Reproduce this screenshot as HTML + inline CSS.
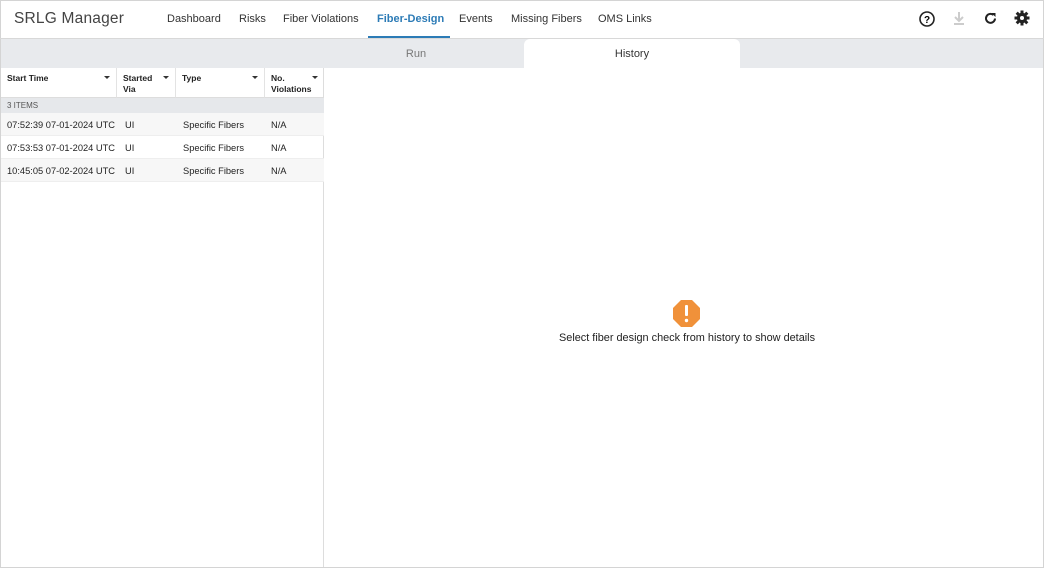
<!DOCTYPE html>
<html><head><style>
*{box-sizing:border-box;margin:0;padding:0}
body{width:1044px;height:568px;overflow:hidden;background:#fff;font-family:"Liberation Sans",sans-serif;color:#222;position:relative}
.frame{position:absolute;inset:0;border:1px solid #d4d4d4}
.top{position:absolute;left:0;top:0;width:1044px;height:39px;border-bottom:1px solid #d8d8d8}
.logo{position:absolute;left:14px;top:10px;font-size:15.5px;color:#444;letter-spacing:0.2px}
.nav{position:absolute;top:13px;font-size:11px;color:#333}
.act{color:#2c7bb6;font-weight:bold}
.ul{position:absolute;left:368px;top:36px;width:82px;height:2px;background:#2c7bb6}
.tabs{position:absolute;left:1px;top:39px;width:1042px;height:29px;background:#e8eaed}
.tab{position:absolute;top:1px;height:29px;line-height:29px;text-align:center;font-size:11px}
.left{position:absolute;left:1px;top:68px;width:323px;height:499px;border-right:1px solid #ddd}
.hdr{position:absolute;top:0;height:30px;font-size:8.5px;font-weight:bold;padding:5px 6px;line-height:11px;border-right:1px solid #e3e3e3;border-bottom:1px solid #ddd;color:#222}
.car{position:absolute;right:6px;top:8px;width:0;height:0;border-left:3px solid transparent;border-right:3px solid transparent;border-top:3px solid #333}
.grp{position:absolute;top:30px;left:0;width:323px;height:15px;background:#e6e8eb;font-size:8px;color:#555;padding:3px 6px}
.row{position:absolute;left:0;width:323px;height:23px;font-size:9.3px;border-bottom:1px solid #eee}
.row span{position:absolute;top:7px}
.msg{position:absolute;left:559px;top:332px;font-size:10.9px;color:#222}
</style></head><body>
<div class="frame"></div>
<div class="top">
<div class="logo">SRLG Manager</div>
<div class="nav" style="left:167px">Dashboard</div>
<div class="nav" style="left:239px">Risks</div>
<div class="nav" style="left:283px">Fiber Violations</div>
<div class="nav act" style="left:377px">Fiber-Design</div>
<div class="nav" style="left:459px">Events</div>
<div class="nav" style="left:511px">Missing Fibers</div>
<div class="nav" style="left:598px">OMS Links</div>
<div class="ul"></div>
<svg style="position:absolute;left:918px;top:10px" width="18" height="18" viewBox="0 0 18 18"><circle cx="9" cy="9" r="7" fill="none" stroke="#222" stroke-width="1.6"/><text x="9" y="13" text-anchor="middle" font-size="10" font-weight="bold" font-family="Liberation Sans">?</text></svg>
<svg style="position:absolute;left:952px;top:11px" width="14" height="15" viewBox="0 0 14 15"><path d="M7 1v8M3 6l4 4 4-4M2 13h10" stroke="#ccc" stroke-width="2" fill="none"/></svg>
<svg style="position:absolute;left:983px;top:11px" width="15" height="15" viewBox="0 0 15 15"><path d="M12 7.5A4.5 4.5 0 1 1 10.5 4" stroke="#222" stroke-width="2" fill="none"/><path d="M8.5 2h4v4z" fill="#222"/></svg>
<svg style="position:absolute;left:1014px;top:10px" width="16" height="16" viewBox="0 0 16 16"><g fill="#222"><circle cx="8" cy="8" r="5.2"/><rect x="6.5" y="0.5" width="3" height="15"/><rect x="0.5" y="6.5" width="15" height="3"/><rect x="6.5" y="0.5" width="3" height="15" transform="rotate(45 8 8)"/><rect x="6.5" y="0.5" width="3" height="15" transform="rotate(-45 8 8)"/></g><circle cx="8" cy="8" r="2" fill="#fff"/></svg>
</div>
<div class="tabs">
<div class="tab" style="left:309px;width:212px;color:#777">Run</div>
<div class="tab" style="left:523px;width:216px;top:0;height:30px;line-height:30px;background:#fff;border-radius:6px 6px 0 0;color:#333">History</div>
</div>
<div class="left">
<div class="hdr" style="left:0;width:116px">Start Time<div class="car"></div></div>
<div class="hdr" style="left:116px;width:59px">Started<br>Via<div class="car"></div></div>
<div class="hdr" style="left:175px;width:89px">Type<div class="car"></div></div>
<div class="hdr" style="left:264px;width:59px;border-right:none">No.<br>Violations<div class="car"></div></div>
<div class="grp">3 ITEMS</div>
<div class="row" style="top:45px;background:#f7f7f7"><span style="left:6px">07:52:39 07-01-2024 UTC</span><span style="left:124px">UI</span><span style="left:182px">Specific Fibers</span><span style="left:270px">N/A</span></div>
<div class="row" style="top:68px"><span style="left:6px">07:53:53 07-01-2024 UTC</span><span style="left:124px">UI</span><span style="left:182px">Specific Fibers</span><span style="left:270px">N/A</span></div>
<div class="row" style="top:91px;background:#f7f7f7"><span style="left:6px">10:45:05 07-02-2024 UTC</span><span style="left:124px">UI</span><span style="left:182px">Specific Fibers</span><span style="left:270px">N/A</span></div>
</div>
<svg style="position:absolute;left:673px;top:300px" width="27" height="27" viewBox="0 0 27 27"><polygon points="8,0 19,0 27,8 27,19 19,27 8,27 0,19 0,8" fill="#f0913a"/><rect x="12" y="5" width="3" height="11" rx="1" fill="#fff"/><circle cx="13.5" cy="20.5" r="1.7" fill="#fff"/></svg>
<div class="msg">Select fiber design check from history to show details</div>
</body></html>
